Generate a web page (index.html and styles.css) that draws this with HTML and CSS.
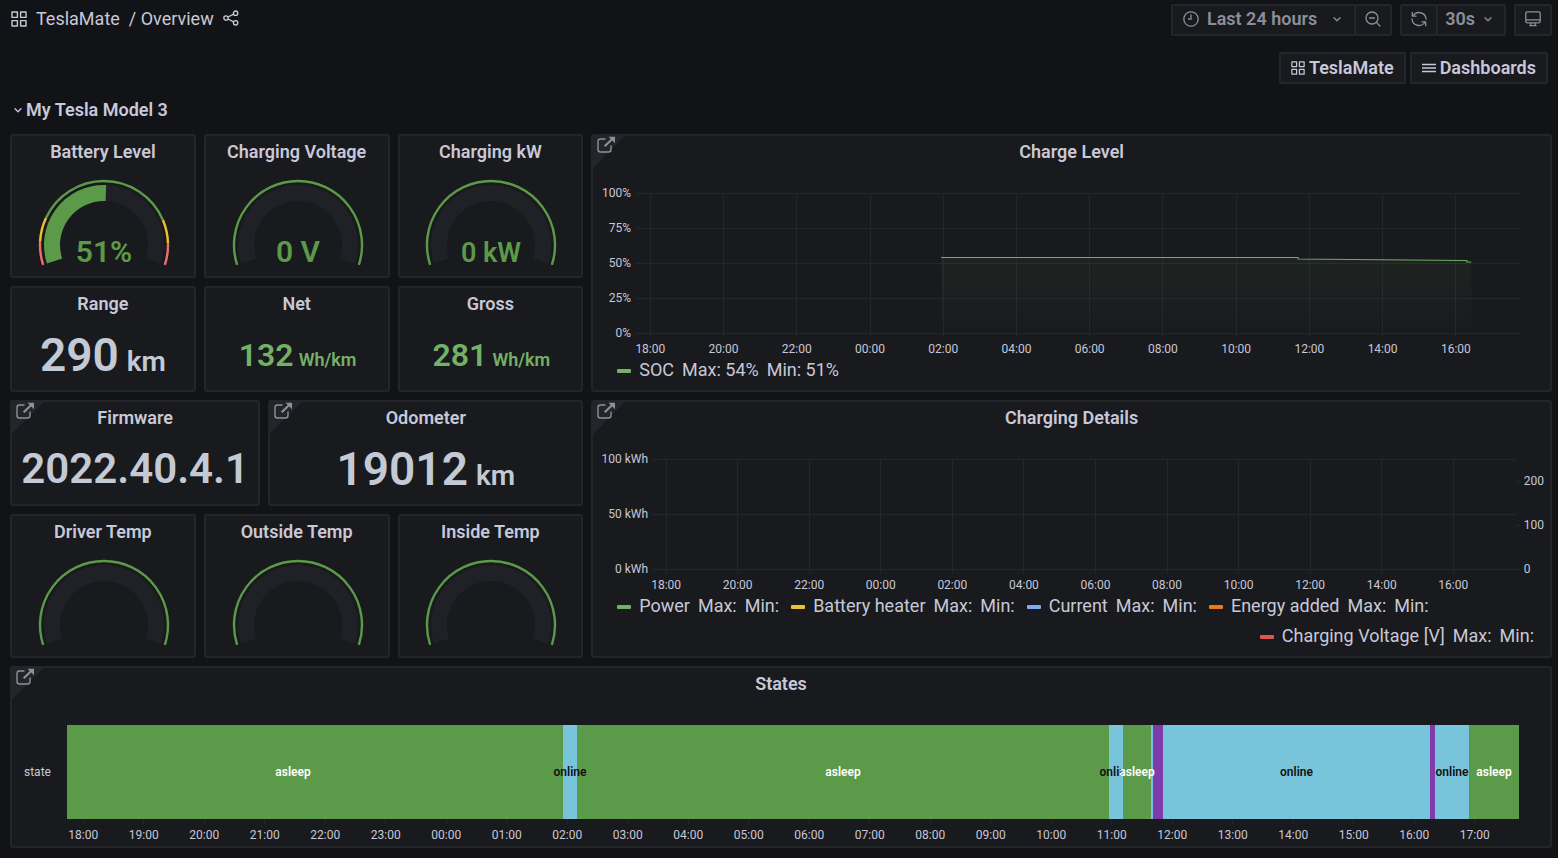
FILE: index.html
```html
<!DOCTYPE html>
<html lang="en">
<head>
<meta charset="utf-8">
<meta name="viewport" content="width=device-width, initial-scale=1">
<title>TeslaMate / Overview</title>
<link rel="stylesheet" href="styles.css">
</head>
<body>
<svg class="defs" aria-hidden="true">
  <symbol id="i-apps" viewBox="0 0 16 16"><path d="M1 1h5.400v5.400H1zM9.600 1H15v5.400H9.600zM1 9.600h5.400V15H1zM9.600 9.600H15V15H9.600z" fill="none" stroke="currentColor" stroke-width="1.400" stroke-linejoin="round"/></symbol>
  <symbol id="i-share" viewBox="0 0 16 16"><g fill="none" stroke="currentColor" stroke-width="1.300"><circle cx="3" cy="8" r="2.200"/><circle cx="12.600" cy="3.200" r="2.200"/><circle cx="12.600" cy="12.800" r="2.200"/><path d="M5 7l5.600-2.800M5 9l5.600 2.800"/></g></symbol>
  <symbol id="i-down" viewBox="0 0 10 10"><path d="M2 3.700l3 3 3-3" fill="none" stroke="currentColor" stroke-width="1.300" stroke-linecap="round" stroke-linejoin="round"/></symbol>
  <symbol id="i-clock" viewBox="0 0 16 16"><g fill="none" stroke="currentColor" stroke-width="1.300" stroke-linecap="round"><circle cx="8" cy="8" r="7.200"/><path d="M8 4v4H5.500"/></g></symbol>
  <symbol id="i-zoomout" viewBox="0 0 16 16"><g fill="none" stroke="currentColor" stroke-width="1.300" stroke-linecap="round"><circle cx="7" cy="7" r="6"/><path d="M4.500 7h5M11.400 11.400L15 15"/></g></symbol>
  <symbol id="i-sync" viewBox="0 0 16 16"><g fill="none" stroke="currentColor" stroke-width="1.300" stroke-linecap="round" stroke-linejoin="round"><path d="M1.300 1.300v3.800h3.800M2 5A7 7 0 0 1 15 8M14.700 14.700v-3.800h-3.800M14 11A7 7 0 0 1 1 8"/></g></symbol>
  <symbol id="i-monitor" viewBox="0 0 16 16"><path d="M2.400.800h11.200a1.600 1.600 0 0 1 1.600 1.600v7.800a1.600 1.600 0 0 1-1.600 1.600H2.400a1.600 1.600 0 0 1-1.600-1.600V2.400A1.600 1.600 0 0 1 2.400.800zM1 8.800h14M5.800 12v2.600h4.400V12M4.400 14.700h7.200" fill="none" stroke="currentColor" stroke-width="1.300"/></symbol>
  <symbol id="i-bars" viewBox="0 0 14 14"><path d="M0 3.500h14M0 7h14M0 10.500h14" stroke="currentColor" stroke-width="1.400"/></symbol>
  <symbol id="i-external" viewBox="0 0 20 18"><path d="M9.500 3H4.500A2.500 2.500 0 0 0 2 5.500v8A2.500 2.500 0 0 0 4.500 16h8a2.500 2.500 0 0 0 2.500-2.500V9.500" fill="none" stroke="currentColor" stroke-width="1.400"/><path d="M8.700 10.300l7.300-7" stroke="currentColor" stroke-width="2.200"/><path d="M12.500.800H19V7.200z" fill="currentColor"/></symbol>
</svg>

<header class="topbar">
  <nav class="crumbs" aria-label="Breadcrumb">
    <svg class="icon"><use href="#i-apps"/></svg>
    <a class="crumb" href="#">TeslaMate</a>
    <a class="crumb" href="#">/ Overview</a>
    <button class="plain" aria-label="Share dashboard"><svg class="icon"><use href="#i-share"/></svg></button>
  </nav>
  <div class="tools">
    <div class="group">
      <button class="tool"><svg class="icon"><use href="#i-clock"/></svg><span class="range">Last 24 hours</span><svg class="caret"><use href="#i-down"/></svg></button>
      <button class="tool" aria-label="Zoom out"><svg class="icon"><use href="#i-zoomout"/></svg></button>
    </div>
    <div class="group">
      <button class="tool" aria-label="Refresh"><svg class="icon"><use href="#i-sync"/></svg></button>
      <button class="tool interval">30s<svg class="caret"><use href="#i-down"/></svg></button>
    </div>
    <button class="tool" aria-label="Cycle view mode"><svg class="icon"><use href="#i-monitor"/></svg></button>
  </div>
</header>

<nav class="links" aria-label="Dashboard links">
  <a class="link" href="#"><svg class="glyph"><use href="#i-apps"/></svg>TeslaMate</a>
  <a class="link" href="#"><svg class="glyph"><use href="#i-bars"/></svg>Dashboards</a>
</nav>

<button class="row-title"><svg class="caret"><use href="#i-down"/></svg>My Tesla Model 3</button>

<main class="board">
  <section class="panel w3 h4">
    <h2 class="title">Battery Level</h2>
    <svg class="gauge" viewBox="0 0 132 90">
      <path class="track" d="M16.550 82.070A52 52 0 1 1 115.450 82.070"/>
      <path class="fill" pathLength="100" stroke-dasharray="51 100" d="M16.550 82.070A52 52 0 1 1 115.450 82.070"/>
      <path class="ring red" pathLength="100" stroke-dasharray="10 81 9 100" d="M5.130 85.780A64 64 0 1 1 126.870 85.780"/>
      <path class="ring yellow" pathLength="100" stroke-dasharray="0 10 10 61 10 100" d="M5.130 85.780A64 64 0 1 1 126.870 85.780"/>
      <path class="ring" pathLength="100" stroke-dasharray="0 20 61 100" d="M5.130 85.780A64 64 0 1 1 126.870 85.780"/>
      <text class="reading" x="66" y="83">51%</text>
    </svg>
  </section>
  <section class="panel w3 h4">
    <h2 class="title">Charging Voltage</h2>
    <svg class="gauge" viewBox="0 0 132 90">
      <path class="track" d="M16.550 82.070A52 52 0 1 1 115.450 82.070"/>
      <path class="ring" d="M5.130 85.780A64 64 0 1 1 126.870 85.780"/>
      <text class="reading" x="66" y="83">0 V</text>
    </svg>
  </section>
  <section class="panel w3 h4">
    <h2 class="title">Charging kW</h2>
    <svg class="gauge" viewBox="0 0 132 90">
      <path class="track" d="M16.550 82.070A52 52 0 1 1 115.450 82.070"/>
      <path class="ring" d="M5.130 85.780A64 64 0 1 1 126.870 85.780"/>
      <text class="reading small" x="66" y="83">0 kW</text>
    </svg>
  </section>

  <section class="panel w15 h7">
    <a class="corner" href="#" aria-label="Open Charge Level"><svg class="ext"><use href="#i-external"/></svg></a>
    <h2 class="title">Charge Level</h2>
    <svg class="plot charge">
      <defs><linearGradient id="soc" x1="0" y1="0" x2="0" y2="1"><stop offset="0" stop-color="#73bf69" stop-opacity=".06"/><stop offset="1" stop-color="#73bf69" stop-opacity="0"/></linearGradient></defs>
      <g class="grid">
        <line x1="-5" x2="100%" y1="0" y2="0"/><line x1="-5" x2="100%" y1="25%" y2="25%"/><line x1="-5" x2="100%" y1="50%" y2="50%"/><line x1="-5" x2="100%" y1="75%" y2="75%"/><line x1="-5" x2="100%" y1="100%" y2="100%"/>
        <line x1="1.060%" x2="1.060%" y2="103%"/><line x1="9.390%" x2="9.390%" y2="103%"/><line x1="17.730%" x2="17.730%" y2="103%"/><line x1="26.060%" x2="26.060%" y2="103%"/><line x1="34.390%" x2="34.390%" y2="103%"/><line x1="42.730%" x2="42.730%" y2="103%"/><line x1="51.060%" x2="51.060%" y2="103%"/><line x1="59.390%" x2="59.390%" y2="103%"/><line x1="67.730%" x2="67.730%" y2="103%"/><line x1="76.060%" x2="76.060%" y2="103%"/><line x1="84.390%" x2="84.390%" y2="103%"/><line x1="92.730%" x2="92.730%" y2="103%"/>
      </g>
      <svg width="100%" height="100%" viewBox="0 0 880 140" preserveAspectRatio="none">
        <path fill="url(#soc)" d="M300.500 64.500H658V66L827 67.500V69H831.500V140H300.500z"/>
        <path class="curve" d="M300.500 64.500H658V66L827 67.500V69H831.500"/>
      </svg>
      <g class="axis y"><text x="-10" y="0" dy="4">100%</text><text x="-10" y="25%" dy="4">75%</text><text x="-10" y="50%" dy="4">50%</text><text x="-10" y="75%" dy="4">25%</text><text x="-10" y="100%" dy="4">0%</text></g>
      <g class="axis x"><text x="1.060%" y="100%" dy="20">18:00</text><text x="9.390%" y="100%" dy="20">20:00</text><text x="17.730%" y="100%" dy="20">22:00</text><text x="26.060%" y="100%" dy="20">00:00</text><text x="34.390%" y="100%" dy="20">02:00</text><text x="42.730%" y="100%" dy="20">04:00</text><text x="51.060%" y="100%" dy="20">06:00</text><text x="59.390%" y="100%" dy="20">08:00</text><text x="67.730%" y="100%" dy="20">10:00</text><text x="76.060%" y="100%" dy="20">12:00</text><text x="84.390%" y="100%" dy="20">14:00</text><text x="92.730%" y="100%" dy="20">16:00</text></g>
    </svg>
    <ul class="legend">
      <li class="key green"><span>SOC</span><span>Max: 54%</span><span>Min: 51%</span></li>
    </ul>
  </section>

  <section class="panel w3 h3">
    <h2 class="title">Range</h2>
    <p class="stat">290<span class="unit">km</span></p>
  </section>
  <section class="panel w3 h3">
    <h2 class="title">Net</h2>
    <p class="stat use">132<span class="unit">Wh/km</span></p>
  </section>
  <section class="panel w3 h3">
    <h2 class="title">Gross</h2>
    <p class="stat use">281<span class="unit">Wh/km</span></p>
  </section>

  <section class="panel w4 h3">
    <a class="corner" href="#" aria-label="Open Firmware"><svg class="ext"><use href="#i-external"/></svg></a>
    <h2 class="title">Firmware</h2>
    <p class="stat version">2022.40.4.1</p>
  </section>
  <section class="panel w5 h3">
    <a class="corner" href="#" aria-label="Open Odometer"><svg class="ext"><use href="#i-external"/></svg></a>
    <h2 class="title">Odometer</h2>
    <p class="stat">19012<span class="unit">km</span></p>
  </section>

  <section class="panel w15 h7">
    <a class="corner" href="#" aria-label="Open Charging Details"><svg class="ext"><use href="#i-external"/></svg></a>
    <h2 class="title">Charging Details</h2>
    <svg class="plot details">
      <g class="grid">
        <line x1="-5" x2="100%" y1="0" y2="0"/><line x1="-5" x2="100%" y1="50%" y2="50%"/><line x1="-5" x2="100.500%" y1="100%" y2="100%"/>
        <line x1="100%" x2="100.500%" y1="20%" y2="20%"/><line x1="100%" x2="100.500%" y1="60%" y2="60%"/>
        <line x1="1.060%" x2="1.060%" y2="104%"/><line x1="9.390%" x2="9.390%" y2="104%"/><line x1="17.730%" x2="17.730%" y2="104%"/><line x1="26.060%" x2="26.060%" y2="104%"/><line x1="34.390%" x2="34.390%" y2="104%"/><line x1="42.730%" x2="42.730%" y2="104%"/><line x1="51.060%" x2="51.060%" y2="104%"/><line x1="59.390%" x2="59.390%" y2="104%"/><line x1="67.730%" x2="67.730%" y2="104%"/><line x1="76.060%" x2="76.060%" y2="104%"/><line x1="84.390%" x2="84.390%" y2="104%"/><line x1="92.730%" x2="92.730%" y2="104%"/>
      </g>
      <g class="axis y"><text x="-9" y="0" dy="4">100 kWh</text><text x="-9" y="50%" dy="4">50 kWh</text><text x="-9" y="100%" dy="4">0 kWh</text></g>
      <g class="axis"><text x="100%" dx="8" y="20%" dy="4">200</text><text x="100%" dx="8" y="60%" dy="4">100</text><text x="100%" dx="8" y="100%" dy="4">0</text></g>
      <g class="axis x"><text x="1.060%" y="100%" dy="20">18:00</text><text x="9.390%" y="100%" dy="20">20:00</text><text x="17.730%" y="100%" dy="20">22:00</text><text x="26.060%" y="100%" dy="20">00:00</text><text x="34.390%" y="100%" dy="20">02:00</text><text x="42.730%" y="100%" dy="20">04:00</text><text x="51.060%" y="100%" dy="20">06:00</text><text x="59.390%" y="100%" dy="20">08:00</text><text x="67.730%" y="100%" dy="20">10:00</text><text x="76.060%" y="100%" dy="20">12:00</text><text x="84.390%" y="100%" dy="20">14:00</text><text x="92.730%" y="100%" dy="20">16:00</text></g>
    </svg>
    <ul class="legend">
      <li class="key green"><span>Power</span><span>Max:</span><span>Min:</span></li>
      <li class="key yellow"><span>Battery heater</span><span>Max:</span><span>Min:</span></li>
      <li class="key blue"><span>Current</span><span>Max:</span><span>Min:</span></li>
      <li class="key orange"><span>Energy added</span><span>Max:</span><span>Min:</span></li>
    </ul>
    <ul class="legend right">
      <li class="key red"><span>Charging Voltage [V]</span><span>Max:</span><span>Min:</span></li>
    </ul>
  </section>

  <section class="panel w3 h4">
    <h2 class="title">Driver Temp</h2>
    <svg class="gauge" viewBox="0 0 132 90">
      <path class="track" d="M16.550 82.070A52 52 0 1 1 115.450 82.070"/>
      <path class="ring" d="M5.130 85.780A64 64 0 1 1 126.870 85.780"/>
    </svg>
  </section>
  <section class="panel w3 h4">
    <h2 class="title">Outside Temp</h2>
    <svg class="gauge" viewBox="0 0 132 90">
      <path class="track" d="M16.550 82.070A52 52 0 1 1 115.450 82.070"/>
      <path class="ring" d="M5.130 85.780A64 64 0 1 1 126.870 85.780"/>
    </svg>
  </section>
  <section class="panel w3 h4">
    <h2 class="title">Inside Temp</h2>
    <svg class="gauge" viewBox="0 0 132 90">
      <path class="track" d="M16.550 82.070A52 52 0 1 1 115.450 82.070"/>
      <path class="ring" d="M5.130 85.780A64 64 0 1 1 126.870 85.780"/>
    </svg>
  </section>

  <section class="panel w24 h5">
    <a class="corner" href="#" aria-label="Open States"><svg class="ext"><use href="#i-external"/></svg></a>
    <h2 class="title">States</h2>
    <div class="timeline">
      <span class="series">state</span>
      <div class="lane">
        <span class="seg asleep started" style="flex-grow:496">asleep</span>
        <span class="seg online over" style="flex-grow:14">online</span>
        <span class="seg asleep" style="flex-grow:532">asleep</span>
        <span class="seg online" style="flex-grow:14">online</span>
        <span class="seg asleep over" style="flex-grow:28">asleep</span>
        <span class="seg online" style="flex-grow:2"></span>
        <span class="seg driving" style="flex-grow:10"></span>
        <span class="seg online" style="flex-grow:267">online</span>
        <span class="seg driving" style="flex-grow:5"></span>
        <span class="seg online" style="flex-grow:34">online</span>
        <span class="seg asleep" style="flex-grow:50">asleep</span>
      </div>
      <svg class="hours">
        <g class="grid"><line x1="1.120%" x2="1.120%" y2="5"/><line x1="5.290%" x2="5.290%" y2="5"/><line x1="9.450%" x2="9.450%" y2="5"/><line x1="13.620%" x2="13.620%" y2="5"/><line x1="17.790%" x2="17.790%" y2="5"/><line x1="21.950%" x2="21.950%" y2="5"/><line x1="26.120%" x2="26.120%" y2="5"/><line x1="30.290%" x2="30.290%" y2="5"/><line x1="34.450%" x2="34.450%" y2="5"/><line x1="38.620%" x2="38.620%" y2="5"/><line x1="42.790%" x2="42.790%" y2="5"/><line x1="46.950%" x2="46.950%" y2="5"/><line x1="51.120%" x2="51.120%" y2="5"/><line x1="55.290%" x2="55.290%" y2="5"/><line x1="59.450%" x2="59.450%" y2="5"/><line x1="63.620%" x2="63.620%" y2="5"/><line x1="67.790%" x2="67.790%" y2="5"/><line x1="71.950%" x2="71.950%" y2="5"/><line x1="76.120%" x2="76.120%" y2="5"/><line x1="80.290%" x2="80.290%" y2="5"/><line x1="84.450%" x2="84.450%" y2="5"/><line x1="88.620%" x2="88.620%" y2="5"/><line x1="92.790%" x2="92.790%" y2="5"/><line x1="96.950%" x2="96.950%" y2="5"/></g>
        <g class="axis x"><text x="1.120%" y="20">18:00</text><text x="5.290%" y="20">19:00</text><text x="9.450%" y="20">20:00</text><text x="13.620%" y="20">21:00</text><text x="17.790%" y="20">22:00</text><text x="21.950%" y="20">23:00</text><text x="26.120%" y="20">00:00</text><text x="30.290%" y="20">01:00</text><text x="34.450%" y="20">02:00</text><text x="38.620%" y="20">03:00</text><text x="42.790%" y="20">04:00</text><text x="46.950%" y="20">05:00</text><text x="51.120%" y="20">06:00</text><text x="55.290%" y="20">07:00</text><text x="59.450%" y="20">08:00</text><text x="63.620%" y="20">09:00</text><text x="67.790%" y="20">10:00</text><text x="71.950%" y="20">11:00</text><text x="76.120%" y="20">12:00</text><text x="80.290%" y="20">13:00</text><text x="84.450%" y="20">14:00</text><text x="88.620%" y="20">15:00</text><text x="92.790%" y="20">16:00</text><text x="96.950%" y="20">17:00</text></g>
      </svg>
    </div>
  </section>
</main>
</body>
</html>
```
FILE: styles.css
```css
* { box-sizing: border-box; }

body {
  margin: 0;
  padding: 4px 6px 10px 10px;
  background: #121317;
  color: #c8c8d8;
  font: 400 18px/24px Roboto, sans-serif;
}

a { color: inherit; text-decoration: none; }
button { font: inherit; color: inherit; margin: 0; padding: 0; border: 0; background: none; cursor: pointer; }
h2, p, ul { margin: 0; padding: 0; }
svg { display: block; flex: none; overflow: visible; }
.defs { position: absolute; width: 0; height: 0; }
.icon { width: 16px; height: 16px; }
.caret { width: 10px; height: 10px; }
.glyph { width: 14px; height: 14px; }

.topbar { display: flex; justify-content: space-between; height: 32px; }
.crumbs { display: flex; align-items: center; gap: 9px; padding: 0 1px 2px; }
.plain { padding-bottom: 3px; }

.tools { display: flex; gap: 8px; color: #8e8e9a; font-weight: 600; }
.group { display: flex; }
.tool {
  display: flex;
  align-items: center;
  padding: 0 9px 2px;
  border: 2px solid #25262b;
  border-radius: 2px;
  background: #191a1e;
}
.group .tool + .tool { margin-left: -2px; }
.range { padding: 0 15px 0 8px; }
.interval { gap: 8px; padding: 0 11px 2px 7px; }
.group:first-child .tool:first-child { padding: 0 12px 2px 10px; }

.links { display: flex; justify-content: flex-end; gap: 4px; margin-top: 16px; padding-right: 4px; }
.link {
  display: flex;
  align-items: center;
  gap: 4px;
  height: 32px;
  padding: 0 10px;
  border: 2px solid #25262b;
  border-radius: 2px;
  background: #191a1e;
  font-weight: 600;
}

.row-title { display: flex; align-items: center; gap: 3px; margin: 14px 0 12px 3px; font-weight: 600; }

.board {
  display: grid;
  grid-template-columns: repeat(24, minmax(0, 1fr));
  grid-auto-rows: minmax(30px, auto);
  gap: 8px;
}
.panel {
  position: relative;
  display: flex;
  flex-direction: column;
  border: 2px solid #232529;
  border-radius: 3px;
  background: #191a1d;
}
.w3 { grid-column: span 3; }
.w4 { grid-column: span 4; }
.w5 { grid-column: span 5; }
.w15 { grid-column: 10 / span 15; }
.w24 { grid-column: span 24; }
.h3 { grid-row: span 3; }
.h4 { grid-row: span 4; }
.h5 { grid-row: span 5; }
.h7 { grid-row: span 7; }

.title { padding: 4px 8px; font-size: 18px; line-height: 24px; font-weight: 600; text-align: center; }
.corner {
  position: absolute;
  top: 0;
  left: 0;
  width: 32px;
  height: 32px;
  background: linear-gradient(135deg, #23252a 50%, transparent 50%);
  color: #8f909c;
}
.ext { width: 20px; height: 18px; margin: 0 0 0 3px; }

.gauge { width: 134px; height: 90px; margin: 11px auto 0; padding-left: 2px; }
.gauge path { fill: none; }
.gauge .track { stroke: #202126; stroke-width: 16; }
.gauge .fill { stroke: #5b9a49; stroke-width: 16; }
.ring { stroke: #5b9a49; stroke-width: 2.4; }
.ring.red { stroke: #ee6e70; }
.ring.yellow { stroke: #ecc22f; }
.reading { fill: #5b9a49; font-size: 30px; font-weight: 600; text-anchor: middle; }
.reading.small { font-size: 27px; }

.stat {
  flex: 1;
  display: flex;
  justify-content: center;
  align-items: baseline;
  gap: 8px;
  padding-top: 8px;
  color: #c3cad5;
  font-size: 46px;
  line-height: 54px;
  font-weight: 600;
}
.unit { font-size: 28px; }
.use { gap: 5px; padding-left: 2px; color: #73b167; font-size: 32px; }
.use .unit { font-size: 18px; }
.version { font-size: 42px; }

.plot { flex: 1 1 0; height: 0; }
.charge { width: calc(100% - 78px); margin: 25px 30px 25px 48px; }
.details { width: calc(100% - 98px); margin: 25px 34px 25px 64px; }
.grid line { stroke: #242629; stroke-width: 1; shape-rendering: crispEdges; }
.curve { fill: none; stroke: #6cae62; stroke-width: 1; vector-effect: non-scaling-stroke; }
.axis { fill: #c8c8d8; font-size: 12px; }
.axis.x { text-anchor: middle; }
.axis.y { text-anchor: end; }

.legend { display: flex; gap: 12px; padding: 0 16px 8px 24px; list-style: none; }
.legend.right { justify-content: flex-end; margin-top: -2px; }
.key { display: flex; align-items: center; gap: 8px; white-space: nowrap; }
.key::before { content: ""; width: 14px; height: 4px; margin-top: 2px; border-radius: 1px; background: currentColor; }
.key span { color: #c8c8d8; }
.key.green { color: #73b167; }
.key.yellow { color: #ecc22f; }
.key.blue { color: #82a8f5; }
.key.orange { color: #eb7b18; }
.key.red { color: #de5450; }

.timeline {
  flex: 1;
  display: grid;
  grid-template: 1fr 27px / 55px 1fr;
  align-items: center;
  padding: 25px 31px 0 0;
  font-size: 12px;
  line-height: 16px;
}
.series { padding-left: 12px; }
.lane { display: flex; align-self: stretch; }
.seg { display: flex; align-items: center; justify-content: center; flex: 1 1 0; min-width: 0; font-weight: 600; }
.started::after { content: ""; width: 44px; }
.asleep { background: #5b9a49; color: #fff; }
.online { background: #78c4da; color: #111; }
.driving { background: #7f3aab; }
.over { z-index: 1; }
.hours { grid-column: 2; width: 100%; height: 27px; }
```
